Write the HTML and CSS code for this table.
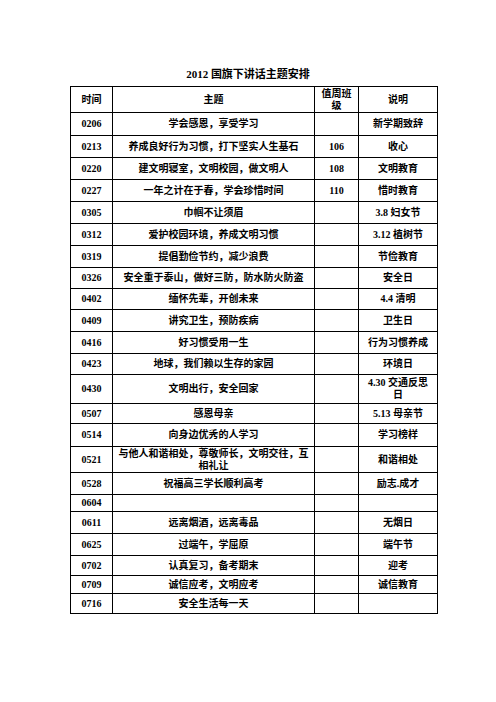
FILE: index.html
```html
<!DOCTYPE html>
<html lang="zh-CN">
<head>
<meta charset="utf-8">
<title>2012 国旗下讲话主题安排</title>
<link rel="stylesheet" href="styles.css">
</head>
<body>
<div class="page">
  <h1 class="title">2012 国旗下讲话主题安排</h1>
  <table class="sched">
    <colgroup>
      <col class="c-date"><col class="c-topic"><col class="c-class"><col class="c-note">
    </colgroup>
    <tr class="h26"><td>时间</td><td>主题</td><td>值周班<br>级</td><td>说明</td></tr>
    <tr class="h23"><td>0206</td><td>学会感恩，享受学习</td><td></td><td>新学期致辞</td></tr>
    <tr class="h22"><td>0213</td><td>养成良好行为习惯，打下坚实人生基石</td><td>106</td><td>收心</td></tr>
    <tr class="h22"><td>0220</td><td>建文明寝室，文明校园，做文明人</td><td>108</td><td>文明教育</td></tr>
    <tr class="h22"><td>0227</td><td>一年之计在于春，学会珍惜时间</td><td>110</td><td>惜时教育</td></tr>
    <tr class="h22"><td>0305</td><td>巾帼不让须眉</td><td></td><td>3.8 妇女节</td></tr>
    <tr class="h22"><td>0312</td><td>爱护校园环境，养成文明习惯</td><td></td><td>3.12 植树节</td></tr>
    <tr class="h22"><td>0319</td><td>提倡勤俭节约，减少浪费</td><td></td><td>节俭教育</td></tr>
    <tr class="h21"><td>0326</td><td>安全重于泰山，做好三防，防水防火防盗</td><td></td><td>安全日</td></tr>
    <tr class="h21"><td>0402</td><td>缅怀先辈，开创未来</td><td></td><td>4.4 清明</td></tr>
    <tr class="h22"><td>0409</td><td>讲究卫生，预防疾病</td><td></td><td>卫生日</td></tr>
    <tr class="h22"><td>0416</td><td>好习惯受用一生</td><td></td><td>行为习惯养成</td></tr>
    <tr class="h21"><td>0423</td><td>地球，我们赖以生存的家园</td><td></td><td>环境日</td></tr>
    <tr class="h29"><td>0430</td><td>文明出行，安全回家</td><td></td><td>4.30 交通反思<br>日</td></tr>
    <tr class="h20"><td>0507</td><td>感恩母亲</td><td></td><td>5.13 母亲节</td></tr>
    <tr class="h23"><td>0514</td><td>向身边优秀的人学习</td><td></td><td>学习榜样</td></tr>
    <tr class="h26"><td>0521</td><td>与他人和谐相处，尊敬师长，文明交往，互<br>相礼让</td><td></td><td>和谐相处</td></tr>
    <tr class="h22"><td>0528</td><td>祝福高三学长顺利高考</td><td></td><td>励志.成才</td></tr>
    <tr class="h17"><td>0604</td><td></td><td></td><td></td></tr>
    <tr class="h22"><td>0611</td><td>远离烟酒，远离毒品</td><td></td><td>无烟日</td></tr>
    <tr class="h22"><td>0625</td><td>过端午，学屈原</td><td></td><td>端午节</td></tr>
    <tr class="h20"><td>0702</td><td>认真复习，备考期末</td><td></td><td>迎考</td></tr>
    <tr class="h18"><td>0709</td><td>诚信应考，文明应考</td><td></td><td>诚信教育</td></tr>
    <tr class="h20"><td>0716</td><td>安全生活每一天</td><td></td><td></td></tr>
  </table>
</div>
</body>
</html>
```

FILE: styles.css
```css
html, body {
  margin: 0;
  padding: 0;
  background: #fff;
}
.page {
  width: 496px;
  padding-top: 66px;
  font-family: "Liberation Serif", "Noto Sans CJK SC", serif;
  color: #000;
}
.title {
  margin: 0;
  font-size: 11px;
  line-height: 16px;
  font-weight: 700;
  text-align: center;
}
.sched {
  margin: 4px 0 0 70px;
  border-collapse: collapse;
  table-layout: fixed;
  width: 367px;
  font-size: 10px;
  font-weight: 700;
}
.c-date { width: 42px; }
.c-topic { width: 202px; }
.c-class { width: 44px; }
.c-note { width: 79px; }
.sched td {
  border: 1px solid #000;
  padding: 0 2px;
  line-height: 12px;
  text-align: center;
  vertical-align: middle;
  white-space: nowrap;
}
.h17 { height: 17px; }
.h18 { height: 18px; }
.h20 { height: 20px; }
.h21 { height: 21px; }
.h22 { height: 22px; }
.h23 { height: 23px; }
.h26 { height: 26px; }
.h29 { height: 29px; }
```
